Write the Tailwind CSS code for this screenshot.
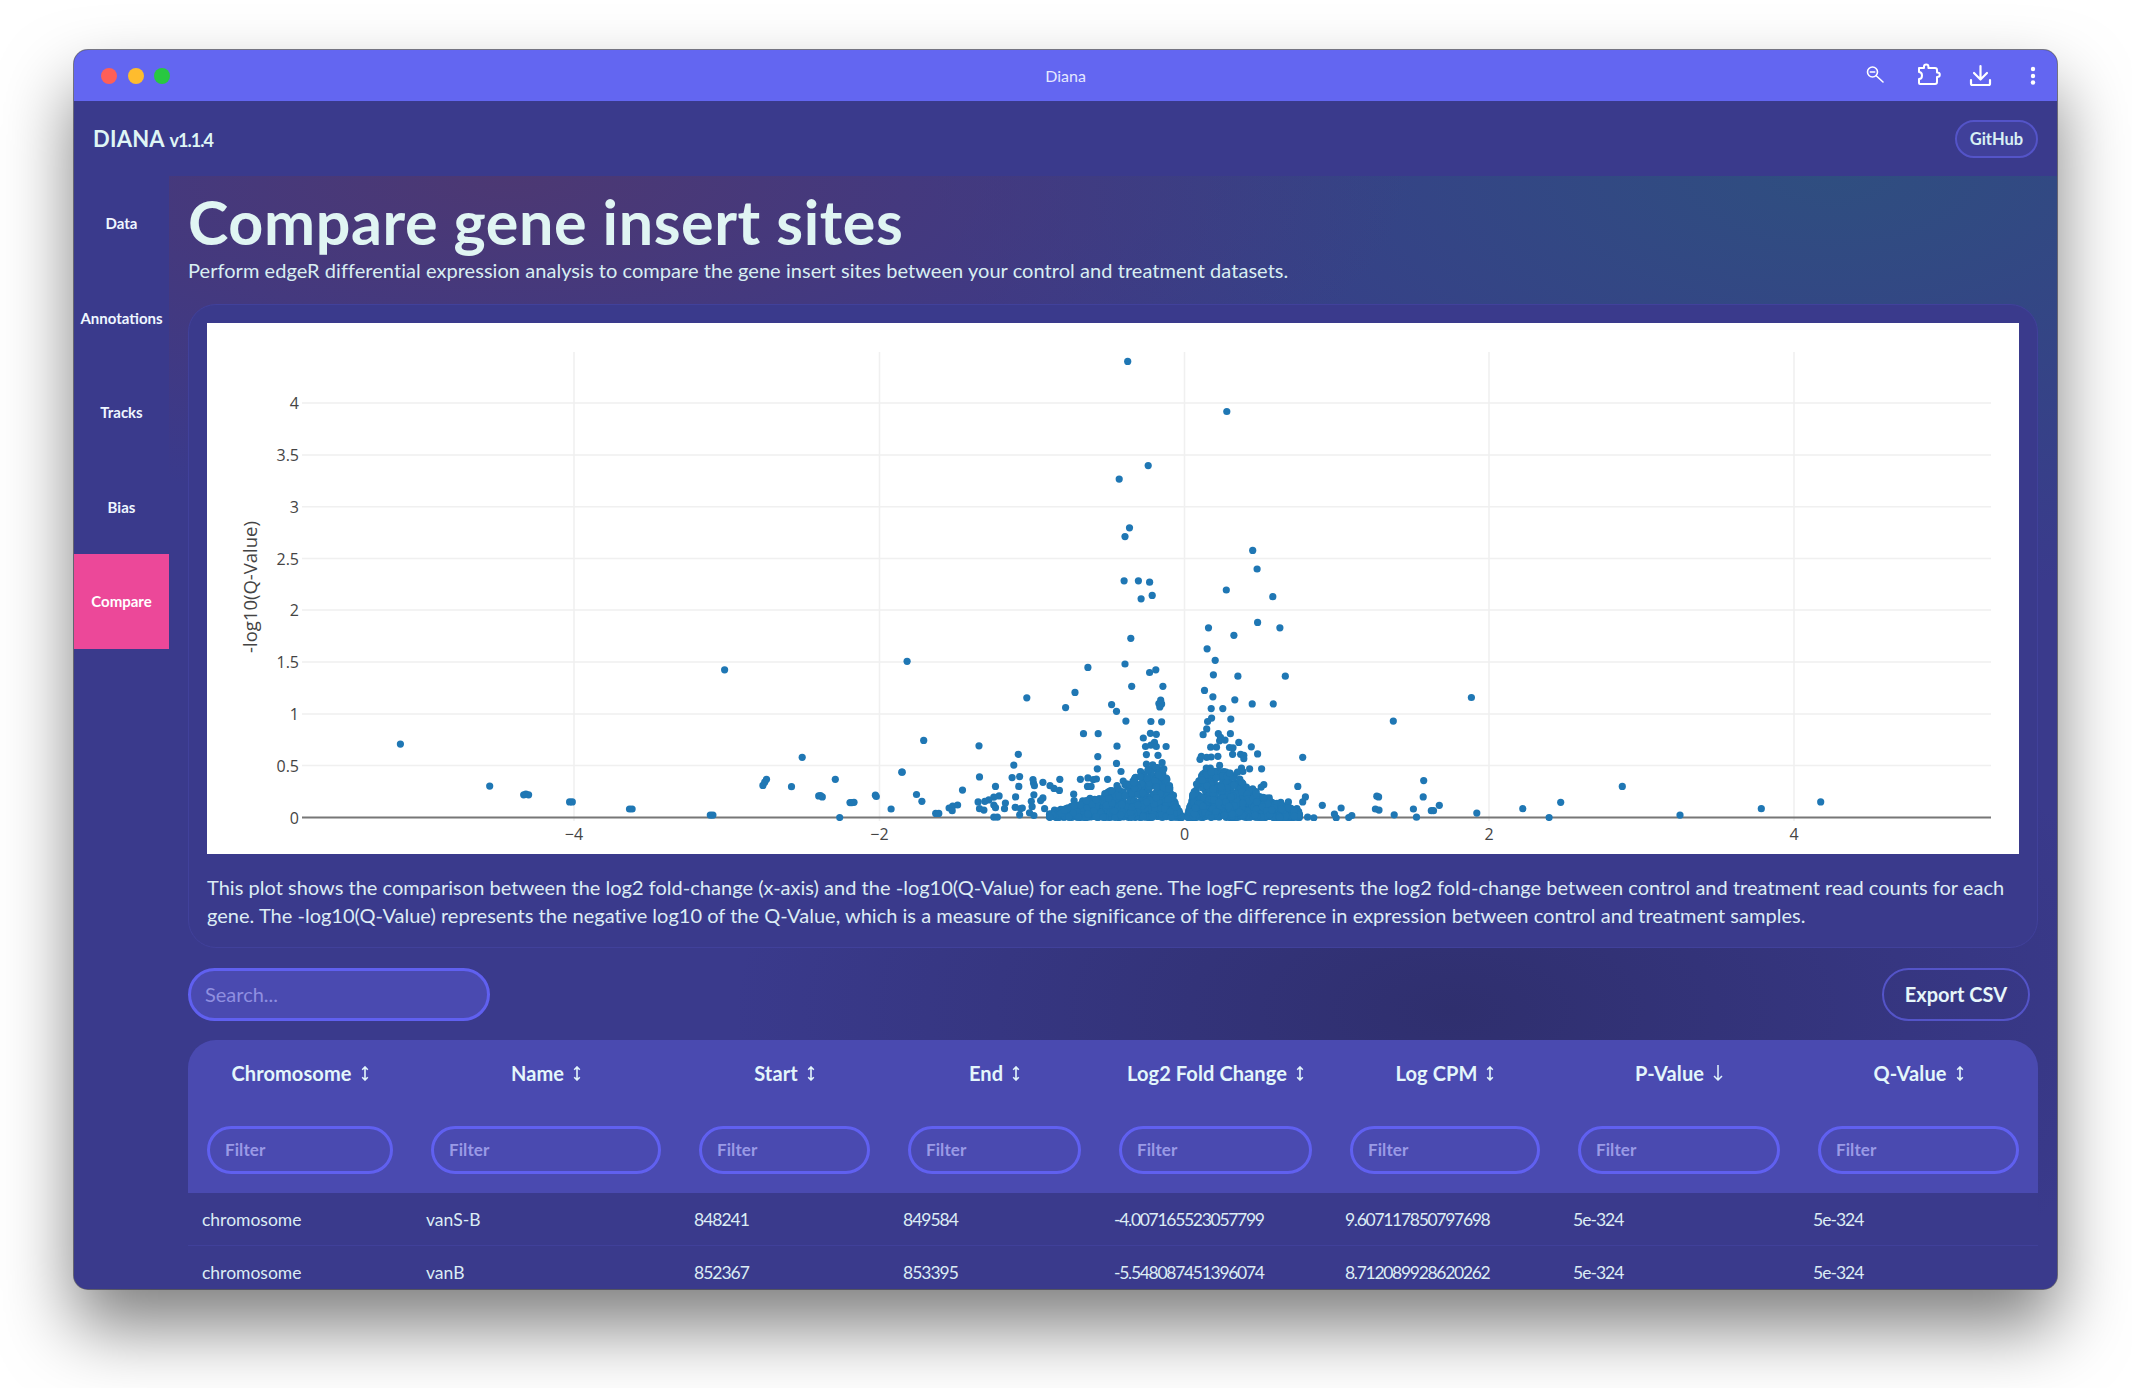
<!DOCTYPE html>
<html lang="en">
<head>
    <meta charset="UTF-8">
    <title>Diana</title>
    <script src="https://cdn.jsdelivr.net/npm/@tailwindcss/browser@4"></script>
</head>
<body class="bg-white h-[1388px] overflow-hidden pt-[50px] pl-[74px] font-[Lato,sans-serif]">
    <div class="w-[1983px] h-[1239px] flex flex-col rounded-[14px] overflow-hidden bg-[#3a3a8c] shadow-[0_0_0_1px_rgba(50,50,70,0.65),0_38px_70px_rgba(0,0,0,0.5)]">

        <!-- title bar -->
        <div class="h-[51px] shrink-0 bg-[#6366f1] grid grid-cols-3 items-center text-white">
            <div class="flex gap-[10.5px] pl-[27px]">
                <span class="w-[16px] h-[16px] rounded-full bg-[#ff5f57]"></span>
                <span class="w-[16px] h-[16px] rounded-full bg-[#febc2e]"></span>
                <span class="w-[16px] h-[16px] rounded-full bg-[#28c840]"></span>
            </div>
            <div class="text-center text-[16px] text-[#e6e8ff]">Diana</div>
            <div class="flex justify-end items-center h-full relative">
                <svg class="absolute left-[469px] top-[14px]" width="22" height="22" viewBox="0 0 22 22" fill="none" stroke="#fff" stroke-width="1.6" stroke-linecap="round">
                    <circle cx="7.5" cy="8" r="5"/><path d="M5.3 8h4.4M11.5 12l6.5 6"/>
                </svg>
                <svg class="absolute left-[521px] top-[13px]" width="24" height="23" viewBox="0 0 24 23" fill="none" stroke="#fff" stroke-width="2" stroke-linejoin="round">
                    <path d="M2 5h5V3.5q0-2 2.2-2t2.2 2V5H18q2 0 2 2v2.5q2.800 0 2.800 2.200T20 14v5q0 2-2 2H3q-1 0-1-1v-4q3 0 3-3.500T2 9z"/>
                </svg>
                <svg class="absolute left-[573px] top-[14px]" width="24" height="24" viewBox="0 0 24 24" fill="none" stroke="#fff" stroke-width="2.200" stroke-linecap="round" stroke-linejoin="round">
                    <path d="M11.500 2v13M5 9l6.500 6.500L18 9M2 16v3.500q0 1.500 1.500 1.500h16q1.500 0 1.500-1.500V16"/>
                </svg>
                <svg class="absolute left-[633px] top-[15px]" width="8" height="22" viewBox="0 0 8 22" fill="#fff">
                    <circle cx="4" cy="4" r="2.200"/><circle cx="4" cy="11" r="2.200"/><circle cx="4" cy="17.500" r="2.200"/>
                </svg>
            </div>
        </div>

        <!-- app header -->
        <div class="h-[75px] shrink-0 bg-[#3a3a8c] flex items-center justify-between pl-[19px] pr-[19px]">
            <div class="font-bold text-[#dff5f5] text-[22px] tracking-[0.2px]">DIANA <span class="text-[18px] tracking-[-1px]">v1.1.4</span></div>
            <button class="h-[38px] w-[83px] rounded-full border-2 border-[#5454c8] bg-[#40409a] pt-[1px] text-[#d8f0f4] text-[16.500px] font-bold">GitHub</button>
        </div>

        <div class="flex-1 flex min-h-0">
            <!-- sidebar -->
            <nav class="w-[95px] shrink-0 bg-[#3a3a8c] flex flex-col text-[15px] font-bold text-[#eef6ff]">
                <a class="h-[94.500px] flex items-center justify-center">Data</a>
                <a class="h-[94.500px] flex items-center justify-center">Annotations</a>
                <a class="h-[94.500px] flex items-center justify-center">Tracks</a>
                <a class="h-[94.500px] flex items-center justify-center">Bias</a>
                <a class="h-[94.500px] flex items-center justify-center bg-[#ec4899] text-white">Compare</a>
            </nav>

            <!-- main -->
            <main class="flex-1 min-w-0 pl-[19px] pr-[19px] overflow-hidden bg-[#3a3a8c] bg-[radial-gradient(ellipse_900px_330px_at_18%_0%,#4c3873_0%,transparent_100%),radial-gradient(ellipse_900px_420px_at_88%_0%,#2f4e80_0%,transparent_100%),radial-gradient(ellipse_720px_360px_at_68%_75%,#2f2f6e_0%,transparent_100%)]">
                <h1 class="pt-[16px] pb-[1px] text-[61px] leading-[60px] tracking-[0.6px] font-bold text-[#e0f5f3]">Compare gene insert sites</h1>
                <p class="mt-[3px] text-[20px] leading-[28px] tracking-[0.05px] text-[#d8eef2]">Perform edgeR differential expression analysis to compare the gene insert sites between your control and treatment datasets.</p>

                <section class="mt-[20px] w-[1850px] rounded-[28px] bg-[#3a3a8c] border border-[#41419b] pt-[18px] pl-[18px] pr-[18px] pb-[18px]">
                    <svg class="block font-['Open_Sans',sans-serif] bg-white" width="1812" height="531" viewBox="207 323 1812 531">
                        <defs>
                            <clipPath id="plotClip"><rect x="302" y="352" width="1689" height="469"/></clipPath>
                        </defs>
                        <g stroke="#f0f0f0" stroke-width="1.500">
                            <path d="M574 352V821M879.500 352V821M1184.500 352V821M1489 352V821M1794 352V821"/>
                            <path d="M302 403H1991M302 455H1991M302 506.700H1991M302 558.600H1991M302 610H1991M302 662H1991M302 714H1991M302 765.500H1991"/>
                        </g>
                        <path d="M302 817.500H1991" stroke="#777" stroke-width="2"/>
                        <g id="points" clip-path="url(#plotClip)" fill="#1f77b4"></g>
                        <g fill="#444" font-size="16" text-anchor="end">
                            <text x="299" y="409">4</text>
                            <text x="299" y="461">3.5</text>
                            <text x="299" y="512.500">3</text>
                            <text x="299" y="564.500">2.5</text>
                            <text x="299" y="616">2</text>
                            <text x="299" y="668">1.5</text>
                            <text x="299" y="720">1</text>
                            <text x="299" y="771.500">0.5</text>
                            <text x="299" y="823.500">0</text>
                        </g>
                        <g fill="#444" font-size="16" text-anchor="middle">
                            <text x="574" y="840">−4</text>
                            <text x="879.500" y="840">−2</text>
                            <text x="1184.500" y="840">0</text>
                            <text x="1489" y="840">2</text>
                            <text x="1794" y="840">4</text>
                        </g>
                        <text x="257" y="587" transform="rotate(-90 257 587)" fill="#444" font-size="18.500" text-anchor="middle">-log10(Q-Value)</text>
                    </svg>
                    <p class="mt-[19px] text-[20px] leading-[28px] tracking-[0.02px] text-[#dcecf4]">This plot shows the comparison between the log2 fold-change (x-axis) and the -log10(Q-Value) for each gene. The logFC represents the log2 fold-change between control and treatment read counts for each<br>gene. The -log10(Q-Value) represents the negative log10 of the Q-Value, which is a measure of the significance of the difference in expression between control and treatment samples.</p>
                </section>

                <div class="mt-[20px] w-[1842px] flex justify-between items-center">
                    <input class="w-[302px] h-[53px] rounded-full border-[3px] border-[#6060f0] bg-[#4a4ab0] pl-[14px] pb-[2px] text-[20px] text-white placeholder:text-[#8f8fe0] outline-none" placeholder="Search...">
                    <button class="w-[148px] h-[53px] rounded-full border-2 border-[#5454c8] pb-[2px] text-[20px] font-bold text-[#e6f6fa]">Export CSV</button>
                </div>

                <div class="mt-[19px] w-[1850px] rounded-t-[28px] overflow-hidden">
                    <table class="w-full table-fixed border-collapse">
                        <colgroup>
                            <col class="w-[224px]"><col class="w-[268px]"><col class="w-[209px]"><col class="w-[211px]"><col class="w-[231px]"><col class="w-[228px]"><col class="w-[240px]"><col class="w-[239px]">
                        </colgroup>
                        <thead class="bg-[#4a4ab0] text-[20px] font-bold tracking-[0.1px] text-[#e3f6fb]">
                            <tr class="h-[66px]">
                                <th><span class="inline-flex items-center gap-[9px]">Chromosome <svg width="8" height="15" viewBox="0 0 8 15" fill="none" stroke="#e3f6fb" stroke-width="1.600"><path d="M4 1v13M1.200 3.800 4 1l2.800 2.800M1.200 11.200 4 14l2.800-2.800"/></svg></span></th>
                                <th><span class="inline-flex items-center gap-[9px]">Name <svg width="8" height="15" viewBox="0 0 8 15" fill="none" stroke="#e3f6fb" stroke-width="1.600"><path d="M4 1v13M1.200 3.800 4 1l2.800 2.800M1.200 11.200 4 14l2.800-2.800"/></svg></span></th>
                                <th><span class="inline-flex items-center gap-[9px]">Start <svg width="8" height="15" viewBox="0 0 8 15" fill="none" stroke="#e3f6fb" stroke-width="1.600"><path d="M4 1v13M1.200 3.800 4 1l2.800 2.800M1.200 11.200 4 14l2.800-2.800"/></svg></span></th>
                                <th><span class="inline-flex items-center gap-[9px]">End <svg width="8" height="15" viewBox="0 0 8 15" fill="none" stroke="#e3f6fb" stroke-width="1.600"><path d="M4 1v13M1.200 3.800 4 1l2.800 2.800M1.200 11.200 4 14l2.800-2.800"/></svg></span></th>
                                <th><span class="inline-flex items-center gap-[9px]">Log2 Fold Change <svg width="8" height="15" viewBox="0 0 8 15" fill="none" stroke="#e3f6fb" stroke-width="1.600"><path d="M4 1v13M1.200 3.800 4 1l2.800 2.800M1.200 11.200 4 14l2.800-2.800"/></svg></span></th>
                                <th><span class="inline-flex items-center gap-[9px]">Log CPM <svg width="8" height="15" viewBox="0 0 8 15" fill="none" stroke="#e3f6fb" stroke-width="1.600"><path d="M4 1v13M1.200 3.800 4 1l2.800 2.800M1.200 11.200 4 14l2.800-2.800"/></svg></span></th>
                                <th><span class="inline-flex items-center gap-[9px]">P-Value <svg width="10" height="16" viewBox="0 0 10 16" fill="none" stroke="#e3f6fb" stroke-width="1.500"><path d="M5 0v15M1 11l4 4 4-4"/></svg></span></th>
                                <th><span class="inline-flex items-center gap-[9px]">Q-Value <svg width="8" height="15" viewBox="0 0 8 15" fill="none" stroke="#e3f6fb" stroke-width="1.600"><path d="M4 1v13M1.200 3.800 4 1l2.800 2.800M1.200 11.200 4 14l2.800-2.800"/></svg></span></th>
                            </tr>
                            <tr>
                                <th class="px-[19px] pt-[20px] pb-[19px]"><input class="block w-full h-[48px] rounded-full border-[3px] border-[#6060f0] bg-transparent pl-[15px] pb-[2px] text-[17px] font-bold placeholder:text-[#9a9ae6] outline-none" placeholder="Filter"></th>
                                <th class="px-[19px] pt-[20px] pb-[19px]"><input class="block w-full h-[48px] rounded-full border-[3px] border-[#6060f0] bg-transparent pl-[15px] pb-[2px] text-[17px] font-bold placeholder:text-[#9a9ae6] outline-none" placeholder="Filter"></th>
                                <th class="px-[19px] pt-[20px] pb-[19px]"><input class="block w-full h-[48px] rounded-full border-[3px] border-[#6060f0] bg-transparent pl-[15px] pb-[2px] text-[17px] font-bold placeholder:text-[#9a9ae6] outline-none" placeholder="Filter"></th>
                                <th class="px-[19px] pt-[20px] pb-[19px]"><input class="block w-full h-[48px] rounded-full border-[3px] border-[#6060f0] bg-transparent pl-[15px] pb-[2px] text-[17px] font-bold placeholder:text-[#9a9ae6] outline-none" placeholder="Filter"></th>
                                <th class="px-[19px] pt-[20px] pb-[19px]"><input class="block w-full h-[48px] rounded-full border-[3px] border-[#6060f0] bg-transparent pl-[15px] pb-[2px] text-[17px] font-bold placeholder:text-[#9a9ae6] outline-none" placeholder="Filter"></th>
                                <th class="px-[19px] pt-[20px] pb-[19px]"><input class="block w-full h-[48px] rounded-full border-[3px] border-[#6060f0] bg-transparent pl-[15px] pb-[2px] text-[17px] font-bold placeholder:text-[#9a9ae6] outline-none" placeholder="Filter"></th>
                                <th class="px-[19px] pt-[20px] pb-[19px]"><input class="block w-full h-[48px] rounded-full border-[3px] border-[#6060f0] bg-transparent pl-[15px] pb-[2px] text-[17px] font-bold placeholder:text-[#9a9ae6] outline-none" placeholder="Filter"></th>
                                <th class="px-[19px] pt-[20px] pb-[19px]"><input class="block w-full h-[48px] rounded-full border-[3px] border-[#6060f0] bg-transparent pl-[15px] pb-[2px] text-[17px] font-bold placeholder:text-[#9a9ae6] outline-none" placeholder="Filter"></th>
                            </tr>
                        </thead>
                        <tbody class="bg-[#3a3a8c] text-[17.500px] text-[#dcecf4]">
                            <tr class="h-[52.500px] border-b border-[#40409a]">
                                <td class="pl-[14px] pt-[2px]">chromosome</td><td class="pl-[14px] pt-[2px]">vanS-B</td><td class="pl-[14px] pt-[2px] tracking-[-1px]">848241</td><td class="pl-[14px] pt-[2px] tracking-[-1px]">849584</td><td class="pl-[14px] pt-[2px] tracking-[-1.300px]">-4.007165523057799</td><td class="pl-[14px] pt-[2px] tracking-[-1.300px]">9.607117850797698</td><td class="pl-[14px] pt-[2px] tracking-[-1px]">5e-324</td><td class="pl-[14px] pt-[2px] tracking-[-1px]">5e-324</td>
                            </tr>
                            <tr class="h-[52.500px]">
                                <td class="pl-[14px] pt-[2px]">chromosome</td><td class="pl-[14px] pt-[2px]">vanB</td><td class="pl-[14px] pt-[2px] tracking-[-1px]">852367</td><td class="pl-[14px] pt-[2px] tracking-[-1px]">853395</td><td class="pl-[14px] pt-[2px] tracking-[-1.300px]">-5.548087451396074</td><td class="pl-[14px] pt-[2px] tracking-[-1.300px]">8.712089928620262</td><td class="pl-[14px] pt-[2px] tracking-[-1px]">5e-324</td><td class="pl-[14px] pt-[2px] tracking-[-1px]">5e-324</td>
                            </tr>
                        </tbody>
                    </table>
                </div>
            </main>
        </div>
    </div>

    <script>
        // points read off the plot: [x, y] measured on the left and centre parts
        const leftPts = [[449,1225],[649,1349],[725,1375],[730,1373],[736,1375],[828,1396],[834,1396],[962,1417],[968,1417],[1143,1435],[1149,1435],[1175,1005],[1261,1347],[1265,1338],[1269,1329],[1325,1351],[1349,1264],[1386,1378],[1390,1377],[1394,1381],[1423,1329],[1433,1442],[1456,1398],[1460,1398],[1465,1397],[1513,1376],[1515,1380],[1548,1417],[1572,1308]];
        const midPts = [[510,93],[732,241],[556,401],[491,441],[514,585],[504,611],[790,652],[800,707],[502,742],[534,742],[559,746],[731,769],[565,785],[540,795],[835,789],[801,865],[691,881],[851,881],[748,903],[517,912],[688,943],[706,977],[16,980],[421,998],[504,988],[573,1005],[559,1013],[702,1020],[757,1024],[863,1024],[519,1054],[589,1054],[682,1066],[392,1072],[701,1085],[284,1088],[1280,1087],[750,1094],[789,1106],[836,1106],[584,1095],[580,1105],[586,1106],[582,1115],[474,1108],[371,1117],[485,1128],[697,1120],[723,1120],[698,1148],[741,1151],[506,1157],[562,1158],[586,1159],[689,1158],[1105,1157],[687,1180],[679,1197],[411,1194],[444,1194],[561,1193],[574,1196],[713,1194],[740,1194],[53,1214],[545,1207],[718,1205],[716,1215],[728,1213],[759,1220],[570,1220],[562,1228],[177,1230],[486,1231],[550,1232],[574,1232],[596,1232],[696,1234],[709,1234],[738,1235],[746,1236],[787,1233],[265,1255],[443,1262],[552,1256],[578,1258],[801,1254],[763,1255],[770,1258],[770,1268],[712,1261],[697,1263],[687,1264],[675,1261],[672,1270],[745,1255],[902,1264],[255,1287],[485,1282],[552,1284],[566,1286],[442,1298],[587,1280],[591,1298],[716,1288],[5,1308],[495,1306],[539,1306],[686,1296],[695,1296],[765,1296],[783,1298],[810,1298],[756,1308],[768,1306],[178,1322],[251,1324],[268,1321],[298,1330],[299,1340],[301,1348],[320,1338],[358,1329],[404,1329],[421,1325],[440,1328],[465,1329],[433,1330],[214,1350],[266,1350],[336,1348],[345,1356],[357,1362],[420,1350],[428,1350],[486,1348],[500,1334],[891,1350],[815,1345],[809,1352],[790,1357],[777,1360],[140,1361],[37,1374],[49,1394],[300,1375],[222,1378],[210,1382],[199,1390],[259,1381],[320,1384],[315,1392],[389,1373],[390,1392],[908,1381],[902,1396],[827,1384],[1068,1379],[1072,1381],[1172,1381],[1173,1333],[1480,1397],[1208,1406],[1395,1416],[1292,1429],[1190,1422],[1195,1422],[1150,1417],[1107,1434],[1157,1441],[1454,1442],[1065,1417],[1073,1420],[1012,1436],[1005,1442],[988,1414],[973,1432],[977,1443],[946,1406],[927,1443],[913,1441],[889,1416],[870,1396],[853,1397],[843,1410],[855,1415],[875,1418],[80,1430],[87,1430],[110,1414],[118,1408],[129,1405],[117,1422],[175,1396],[190,1394],[178,1416],[188,1420],[210,1405],[214,1413],[236,1399],[234,1416],[210,1441],[218,1441],[258,1412],[270,1416],[274,1414],[268,1434],[294,1394],[296,1410],[290,1428],[300,1436],[324,1416],[346,1420],[360,1418]];
        const rightPts = [[67,1350],[240,1435],[484,1416],[662,1396]];

        const group = document.getElementById('points');
        function dot(x, y) {
            const c = document.createElementNS('http://www.w3.org/2000/svg', 'circle');
            c.setAttribute('cx', x.toFixed(1));
            c.setAttribute('cy', y.toFixed(1));
            c.setAttribute('r', '3.6');
            group.appendChild(c);
        }
        leftPts.forEach(p => dot(200 + p[0] / 2.24, 330 + p[1] / 2.958));
        midPts.forEach(p => dot(900 + p[0] / 2.24, 330 + p[1] / 2.958));
        rightPts.forEach(p => dot(1600 + p[0] / 3, 330 + p[1] / 2.958));

        // dense part around zero, height limit in px per distance from x=0
        const leftEnv = [[3,2],[8,12],[12,26],[18,44],[24,54],[34,50],[51,40],[68,30],[84,22],[100,18],[118,10],[135,4]];
        const rightEnv = [[3,2],[7,20],[12,34],[16,44],[32,48],[49,44],[65,30],[82,20],[99,12],[115,6]];
        let seed = 1234;
        function rnd() {
            seed = (seed * 16807) % 2147483647;
            return seed / 2147483647;
        }
        function limit(env, d) {
            for (let i = 1; i < env.length; i++) {
                if (d <= env[i][0]) {
                    const t = (d - env[i - 1][0]) / (env[i][0] - env[i - 1][0]);
                    return env[i - 1][1] + t * (env[i][1] - env[i - 1][1]);
                }
            }
            return 0;
        }
        for (let i = 0; i < 800; i++) {
            const d = 3 + Math.pow(rnd(), 1.2) * 132;
            dot(1184.5 - d, 817.5 - Math.pow(rnd(), 1.4) * limit(leftEnv, d));
        }
        for (let i = 0; i < 800; i++) {
            const d = 3 + Math.pow(rnd(), 1.2) * 112;
            dot(1184.5 + d, 817.5 - Math.pow(rnd(), 1.4) * limit(rightEnv, d));
        }
    </script>
</body>
</html>
